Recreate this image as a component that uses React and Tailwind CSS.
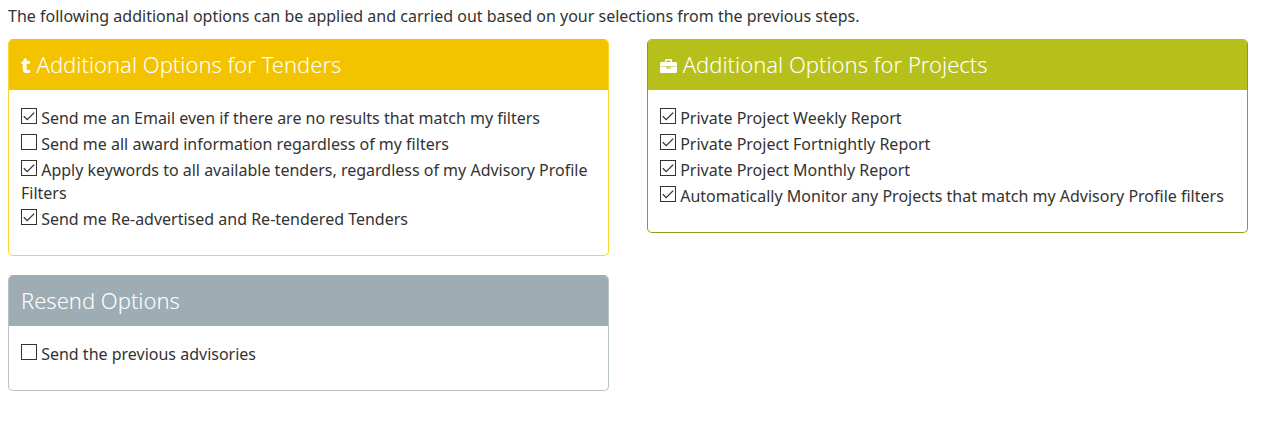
import React from 'react';

const tenderOptions = [
  { id: 'tender-email', label: 'Send me an Email even if there are no results that match my filters', checked: true },
  { id: 'tender-awards', label: 'Send me all award information regardless of my filters', checked: false },
  {
    id: 'tender-keywords',
    label: 'Apply keywords to all available tenders, regardless of my Advisory Profile Filters',
    checked: true,
  },
  { id: 'tender-readvertised', label: 'Send me Re-advertised and Re-tendered Tenders', checked: true },
];

const projectOptions = [
  { id: 'project-weekly', label: 'Private Project Weekly Report', checked: true },
  { id: 'project-fortnightly', label: 'Private Project Fortnightly Report', checked: true },
  { id: 'project-monthly', label: 'Private Project Monthly Report', checked: true },
  {
    id: 'project-monitor',
    label: 'Automatically Monitor any Projects that match my Advisory Profile filters',
    checked: true,
  },
];

const resendOptions = [{ id: 'resend-previous', label: 'Send the previous advisories', checked: false }];

function BriefcaseIcon() {
  return (
    <svg viewBox="0 0 17 14" className="inline-block w-[17px] h-[14px] align-baseline" fill="currentColor" aria-hidden="true">
      <path
        fillRule="evenodd"
        d="M5 3V1.2Q5 0 6.2 0h4.6Q12 0 12 1.2V3h3.6Q17 3 17 4.4V7H0V4.4Q0 3 1.4 3zM6.5 3h4V1.5h-4z"
      />
      <path d="M0 7.6h6.5v2h4v-2H17v5.2q0 1.2-1.2 1.2H1.2Q0 14 0 12.8zM7.5 7.6h2v1h-2z" />
    </svg>
  );
}

function Option({ option }) {
  return (
    <li>
      <span className="inline-grid align-baseline">
        <input
          type="checkbox"
          id={option.id}
          defaultChecked={option.checked}
          className="peer col-start-1 row-start-1 appearance-none w-4 h-4 border border-[#333] bg-white"
        />
        <svg
          viewBox="0 0 16 16"
          className="col-start-1 row-start-1 w-4 h-4 pointer-events-none invisible peer-checked:visible"
          fill="none"
          stroke="#333"
          strokeWidth="1.3"
          aria-hidden="true"
        >
          <path d="M2.8 8.2 6.2 11.6 13.2 4.6" />
        </svg>
      </span>{' '}
      <label htmlFor={option.id}>{option.label}</label>
    </li>
  );
}

function Panel({ title, icon, options, borderClass, headerClass }) {
  return (
    <section className={`border rounded-[5px] overflow-hidden ${borderClass}`}>
      <h2 className={`px-3 pt-[7px] pb-[9px] text-[22px] leading-[34px] font-light text-white ${headerClass}`}>
        {icon}
        {icon && ' '}
        {title}
      </h2>
      <ul className="px-3 pt-[17px] pb-6 space-y-[3px]">
        {options.map((option) => (
          <Option key={option.id} option={option} />
        ))}
      </ul>
    </section>
  );
}

export default function App() {
  return (
    <main className="pl-2 pr-[14px] pt-[5px] font-['Noto_Sans','Open_Sans',sans-serif] text-base leading-[23px] text-[#333]">
      <p className="mb-[11px]">
        The following additional options can be applied and carried out based on your selections from the previous
        steps.
      </p>

      <div className="grid grid-cols-2 gap-[38px] items-start">
        {/* Left column */}
        <div className="flex flex-col gap-[19px]">
          <Panel
            title="Additional Options for Tenders"
            icon={<span className="font-extrabold">t</span>}
            options={tenderOptions}
            borderClass="border-[#fcd52c] border-t-[#f4c300]"
            headerClass="bg-[#f4c300]"
          />
          <Panel
            title="Resend Options"
            options={resendOptions}
            borderClass="border-[#b7c1c8] border-t-[#9eacb3]"
            headerClass="bg-[#9eacb3]"
          />
        </div>

        {/* Right column */}
        <Panel
          title="Additional Options for Projects"
          icon={<BriefcaseIcon />}
          options={projectOptions}
          borderClass="border-[#8a9e1c] border-t-[#b7bf1b]"
          headerClass="bg-[#b7bf1b]"
        />
      </div>
    </main>
  );
}
